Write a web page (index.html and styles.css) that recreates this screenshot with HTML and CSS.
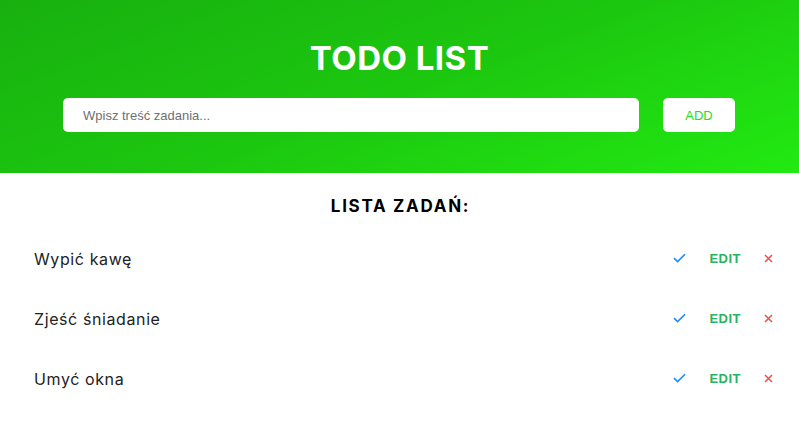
FILE: index.html
```html
<!DOCTYPE html>
<html lang="pl">
<head>
<meta charset="utf-8">
<title>Todo List</title>
<link rel="stylesheet" href="styles.css">
</head>
<body>
<header class="header">
  <h1 class="title">TODO LIST</h1>
  <form class="add-form">
    <input class="add-input" type="text" placeholder="Wpisz treść zadania...">
    <button class="add-btn" type="button">ADD</button>
  </form>
</header>
<main class="list">
  <h2 class="list-title">LISTA ZADAŃ:</h2>
  <ul class="tasks">
    <li class="task">
      <span class="task-text">Wypić kawę</span>
      <div class="actions">
        <button class="btn-done" type="button"><svg width="13" height="10" viewBox="0 0 13 10"><path d="M1 5.2 L4.6 8.6 L12 1.2" fill="none" stroke="#1a8cff" stroke-width="1.6"/></svg></button>
        <button class="btn-edit" type="button">EDIT</button>
        <button class="btn-del" type="button"><svg width="9" height="9" viewBox="0 0 9 9"><path d="M1 1 L8 8 M8 1 L1 8" stroke="#ef5350" stroke-width="1.6"/></svg></button>
      </div>
    </li>
    <li class="task">
      <span class="task-text">Zjeść śniadanie</span>
      <div class="actions">
        <button class="btn-done" type="button"><svg width="13" height="10" viewBox="0 0 13 10"><path d="M1 5.2 L4.6 8.6 L12 1.2" fill="none" stroke="#1a8cff" stroke-width="1.6"/></svg></button>
        <button class="btn-edit" type="button">EDIT</button>
        <button class="btn-del" type="button"><svg width="9" height="9" viewBox="0 0 9 9"><path d="M1 1 L8 8 M8 1 L1 8" stroke="#ef5350" stroke-width="1.6"/></svg></button>
      </div>
    </li>
    <li class="task">
      <span class="task-text">Umyć okna</span>
      <div class="actions">
        <button class="btn-done" type="button"><svg width="13" height="10" viewBox="0 0 13 10"><path d="M1 5.2 L4.6 8.6 L12 1.2" fill="none" stroke="#1a8cff" stroke-width="1.6"/></svg></button>
        <button class="btn-edit" type="button">EDIT</button>
        <button class="btn-del" type="button"><svg width="9" height="9" viewBox="0 0 9 9"><path d="M1 1 L8 8 M8 1 L1 8" stroke="#ef5350" stroke-width="1.6"/></svg></button>
      </div>
    </li>
  </ul>
</main>
</body>
</html>
```
FILE: styles.css
```css
* { box-sizing: border-box; }
html, body { margin: 0; padding: 0; background: #fff; }
body { font-family: "Inter", "DejaVu Sans", sans-serif; color: #222; }

.header {
  height: 173px;
  background: linear-gradient(160deg, #18b00f 0%, #1cc70f 50%, #22ea12 100%);
  padding-top: 36px;
}
.title {
  margin: 0;
  text-align: center;
  color: #fff;
  font-size: 33px;
  font-weight: 700;
  line-height: 44px;
  letter-spacing: 0.5px;
}
.add-form {
  display: flex;
  margin: 18px 64px 0 63px;
  gap: 24px;
}
.add-input {
  flex: 1;
  height: 34px;
  border: none;
  border-radius: 5px;
  padding: 0 20px;
  font-family: "Liberation Sans", Arial, sans-serif;
  font-size: 13px;
  color: #333;
  outline: none;
}
.add-input::placeholder { color: #6f6f6f; }
.add-btn {
  width: 72px;
  height: 34px;
  border: none;
  border-radius: 5px;
  background: #fff;
  color: #22dd22;
  font-family: "Liberation Sans", Arial, sans-serif;
  font-size: 13px;
  padding: 0;
}

.list { padding: 0 26px 0 34px; }
.list-title {
  margin: 21px 0 0;
  text-align: center;
  font-size: 17px;
  font-weight: 700;
  line-height: 24px;
  color: #000;
  letter-spacing: 1.7px;
  padding-right: 6px;
}
.tasks { list-style: none; margin: 10px 0 0; padding: 0; }
.task {
  display: flex;
  align-items: center;
  justify-content: space-between;
  height: 60px;
}
.task-text { font-size: 16px; color: #222; font-weight: 400; letter-spacing: 0.6px; padding-top: 1px; }
.actions { display: flex; align-items: center; }
.actions button {
  border: none;
  background: none;
  padding: 0;
  display: flex;
  align-items: center;
}
.btn-done { margin-right: 23px; }
.btn-edit {
  font-family: "Liberation Sans", Arial, sans-serif;
  font-size: 13px;
  font-weight: 700;
  letter-spacing: 0.5px;
  color: #28b463;
  margin-right: 23px;
}
```
